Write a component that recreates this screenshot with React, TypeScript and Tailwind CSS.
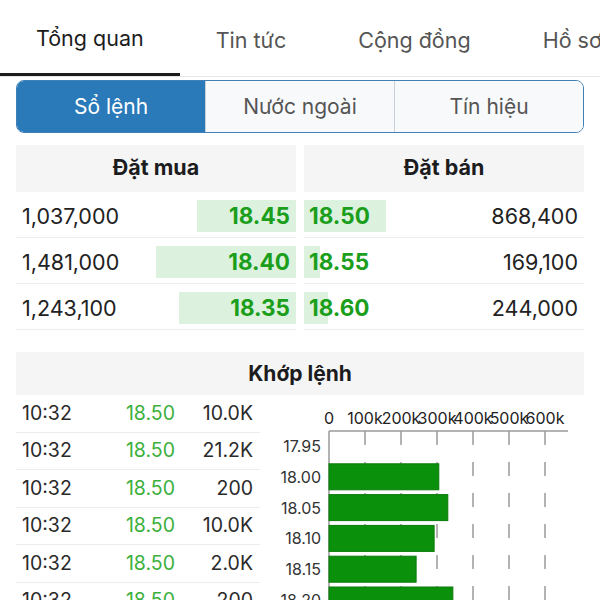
import React from 'react'

const font = { fontFamily: 'Inter, "Liberation Sans", Arial, sans-serif' }

const tabs = ['Tổng quan', 'Tin tức', 'Cộng đồng', 'Hồ sơ']
const segments = ['Sổ lệnh', 'Nước ngoài', 'Tín hiệu']

const bids = [
  { vol: '1,037,000', price: '18.45', bar: 99 },
  { vol: '1,481,000', price: '18.40', bar: 140 },
  { vol: '1,243,100', price: '18.35', bar: 117 },
]

const asks = [
  { vol: '868,400', price: '18.50', bar: 82 },
  { vol: '169,100', price: '18.55', bar: 16 },
  { vol: '244,000', price: '18.60', bar: 24 },
]

const trades = [
  { time: '10:32', price: '18.50', vol: '10.0K' },
  { time: '10:32', price: '18.50', vol: '21.2K' },
  { time: '10:32', price: '18.50', vol: '200' },
  { time: '10:32', price: '18.50', vol: '10.0K' },
  { time: '10:32', price: '18.50', vol: '2.0K' },
  { time: '10:32', price: '18.50', vol: '200' },
]

const volumes = [
  { price: '17.95', v: 0 },
  { price: '18.00', v: 305 },
  { price: '18.05', v: 330 },
  { price: '18.10', v: 292 },
  { price: '18.15', v: 242 },
  { price: '18.20', v: 344 },
]

function VolumeChart() {
  const x0 = 69
  const step = 36
  const ticks = [0, 100, 200, 300, 400, 500, 600]
  return (
    <svg width="324" height="220" className="block">
      {ticks.map((t, i) => (
        <text
          key={t}
          x={x0 + i * step}
          y={29}
          textAnchor="middle"
          fontSize="16"
          fill="#222"
          style={font}
        >
          {t === 0 ? '0' : `${t}k`}
        </text>
      ))}
      <line x1={x0} y1={36} x2={308} y2={36} stroke="#9a9a9a" strokeWidth="1.5" />
      {ticks.slice(1).map((t, i) => (
        <line
          key={t}
          x1={x0 + (i + 1) * step}
          y1={36}
          x2={x0 + (i + 1) * step}
          y2={220}
          stroke="#9a9a9a"
          strokeWidth="1.5"
          strokeDasharray="14 17"
        />
      ))}
      <line x1={x0} y1={36} x2={x0} y2={220} stroke="#9a9a9a" strokeWidth="1.5" />
      {volumes.map((r, i) => {
        const cy = 51 + i * 30.8
        return (
          <g key={r.price}>
            <text x={61} y={cy + 6} textAnchor="end" fontSize="16" fill="#333" style={font}>
              {r.price}
            </text>
            {r.v > 0 && (
              <rect
                x={x0}
                y={cy - 13}
                width={(r.v / 100) * step}
                height={26}
                fill="#0a900a"
                stroke="#0b7a0b"
                strokeWidth="1"
              />
            )}
          </g>
        )
      })}
    </svg>
  )
}

export default function App() {
  return (
    <div className="w-[600px] h-[600px] overflow-hidden bg-white" style={font}>
      {/* top tabs */}
      <div className="flex h-[77px] border-b border-[#e6e6e6]">
        {tabs.map((t, i) => (
          <div
            key={t}
            className={`shrink-0 px-9 pt-1 flex items-center text-[21.5px] ${
              i === 0 ? 'text-[#1c1c1e] border-b-[3px] border-[#1c1c1e]' : 'text-[#555]'
            }`}
          >
            {t}
          </div>
        ))}
      </div>

      {/* segmented control */}
      <div className="mx-4 mt-[3px] h-[53px] flex rounded-lg border-[1.5px] border-[#3f80b7] overflow-hidden">
        {segments.map((s, i) => (
          <div
            key={s}
            className={`flex-1 flex items-center justify-center text-[21px] ${
              i === 0
                ? 'bg-[#2a7ab9] text-white'
                : 'bg-[#f8f9fb] text-[#555] border-l border-[#c9d0da]'
            }`}
          >
            {s}
          </div>
        ))}
      </div>

      {/* order book */}
      <div className="mx-4 mt-[12px] grid grid-cols-2 gap-2">
        <div>
          <div className="h-[47px] pb-[3px] bg-[#f5f5f5] flex items-center justify-center text-[21.5px] font-bold text-[#1c1c1e]">
            Đặt mua
          </div>
          {bids.map((b) => (
            <div
              key={b.price}
              className="relative h-[45px] mt-[1px] border-b border-[#ececec] flex items-center justify-between pl-[6px] pr-[6px] pt-[2px]"
            >
              <div
                className="absolute right-0 top-[7px] h-[32px] bg-[#dcf2de]"
                style={{ width: b.bar }}
              />
              <span className="relative text-[21.5px] text-[#222]">{b.vol}</span>
              <span className="relative text-[22.5px] font-bold text-[#1b9e1b]">{b.price}</span>
            </div>
          ))}
        </div>
        <div>
          <div className="h-[47px] pb-[3px] bg-[#f5f5f5] flex items-center justify-center text-[21.5px] font-bold text-[#1c1c1e]">
            Đặt bán
          </div>
          {asks.map((a) => (
            <div
              key={a.price}
              className="relative h-[45px] mt-[1px] border-b border-[#ececec] flex items-center justify-between pl-[5px] pr-[6px] pt-[2px]"
            >
              <div
                className="absolute left-0 top-[7px] h-[32px] bg-[#dcf2de]"
                style={{ width: a.bar }}
              />
              <span className="relative text-[22.5px] font-bold text-[#1b9e1b]">{a.price}</span>
              <span className="relative text-[21.5px] text-[#222]">{a.vol}</span>
            </div>
          ))}
        </div>
      </div>

      {/* matched orders */}
      <div className="mx-4 mt-[22px]">
        <div className="h-[43px] bg-[#f5f5f5] flex items-center justify-center text-[21px] font-bold text-[#1c1c1e]">
          Khớp lệnh
        </div>
        <div className="flex">
          <div className="w-[244px] shrink-0">
            {trades.map((t, i) => (
              <div
                key={i}
                className="h-[37.5px] border-b border-[#ececec] grid grid-cols-[1fr_70px_78px] items-center pl-[6px] pr-[7px] text-[19.5px]"
              >
                <span className="text-[#2a2a2a]">{t.time}</span>
                <span className="text-right text-[#3cb03c]">{t.price}</span>
                <span className="text-right text-[#2a2a2a]">{t.vol}</span>
              </div>
            ))}
          </div>
          <VolumeChart />
        </div>
      </div>
    </div>
  )
}
